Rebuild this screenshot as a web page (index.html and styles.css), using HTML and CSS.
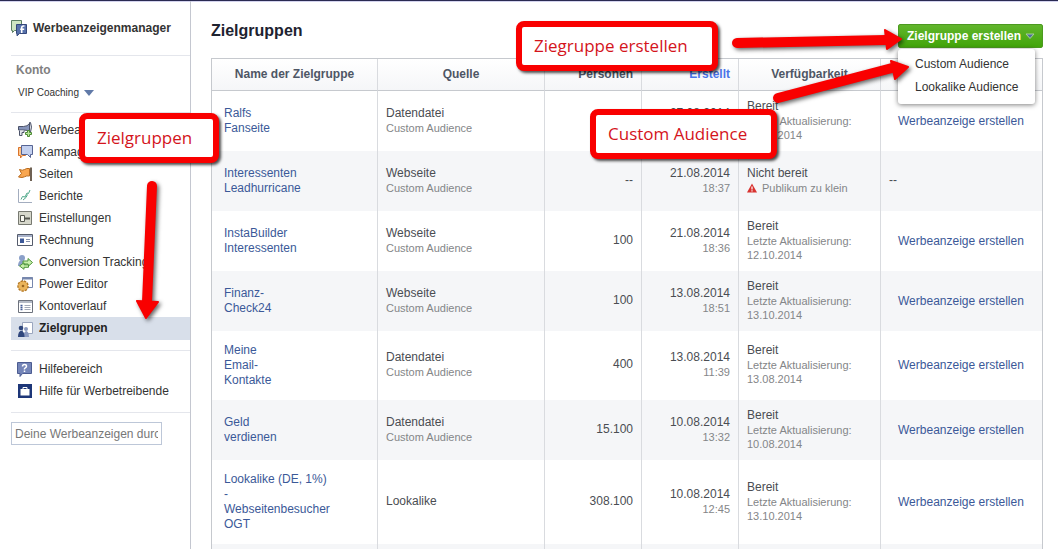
FILE: index.html
```html
<!DOCTYPE html>
<html lang="de">
<head>
<meta charset="utf-8">
<title>Werbeanzeigenmanager – Zielgruppen</title>
<link rel="stylesheet" href="styles.css">
</head>
<body>
<div class="page">
  <aside class="sidebar">
    <a class="brand" href="#">
      <svg class="icon" viewBox="0 0 16 16"><path d="M.5.500h10v10h-7l-2 2v-2h-1z" fill="#cfe6c2" stroke="#5c7f63"/><path d="M5.500 4.500h10v9h-7l-2.500 2.300v-2.300h-.5z" fill="#5872ab" stroke="#34487c"/><path d="M13.500 6h-1q-1.800 0-1.800 1.800v5.200M9.200 9.200h4" fill="none" stroke="#fff" stroke-width="1.600"/></svg>
      <span>Werbeanzeigenmanager</span>
    </a>
    <section class="account">
      <h2>Konto</h2>
      <button class="account-switch" type="button">VIP Coaching <svg class="caret" viewBox="0 0 10 6"><path d="M0 0h10L5 6z" fill="#617aa8"/></svg></button>
    </section>
    <nav class="nav">
      <a href="#"><svg class="icon" viewBox="0 0 16 16"><path d="M1.500 4.500h5q4 0 6-3v8q-2-1.500-6-1.500h-5z" fill="#8795bb" stroke="#4b5268"/><path d="M13.500.500q2 4.500 0 9.500h-1V.500z" fill="#e4e6ec" stroke="#4b5268"/><path d="M2.500 8.500v5h2.500v-3h2v-2" fill="#e4e6ec" stroke="#4b5268"/><path d="M10.500 8.500h2v2h2v2h-2v2h-2v-2h-2v-2h2z" fill="#b8e69b" stroke="#4d8a36"/></svg><span>Werbeanzeigen</span></a>
      <a href="#"><svg class="icon" viewBox="0 0 16 16"><path d="M1.500 3.500h7v8h-3l-2 2.500v-2.500h-2z" fill="#ffc48a" stroke="#d9742b"/><path d="M4.500 1.500h11v9h-2v3l-3-3h-6z" fill="#c3d0ef" stroke="#566493"/></svg><span>Kampagnen</span></a>
      <a href="#"><svg class="icon" viewBox="0 0 16 16"><path d="M2.500 3.500q3 1.500 5 0t5-1v7.500q-3-.500-5 .800t-6 .200l3-3.500z" fill="#f9a64f" stroke="#b96a1d"/><path d="M14 1.500V15" stroke="#6e6153" stroke-width="2"/></svg><span>Seiten</span></a>
      <a href="#"><svg class="icon" viewBox="0 0 16 16"><path d="M1.500 1v13.500H15" fill="none" stroke="#a3adbf"/><path d="M4 11.500l1.500-3 2.500.500 2-4 1.500.500L13 2M6 12l3-2.500 1.500-3" fill="none" stroke="#4fa98a"/></svg><span>Berichte</span></a>
      <a href="#"><svg class="icon" viewBox="0 0 16 16"><path d="M1.500 1.500h13v13h-13z" fill="#d6d7cb" stroke="#777971"/><path d="M3.500 5.500h4v6h-4z" fill="#f7f7f0" stroke="#54564f"/><path d="M7.500 8.500H13" stroke="#54564f" stroke-width="2"/></svg><span>Einstellungen</span></a>
      <a href="#"><svg class="icon" viewBox="0 0 16 16"><path d="M.5 2.500h15v11H.5z" fill="#fff" stroke="#555c6c"/><path d="M1 4h14" stroke="#a9b3cb" stroke-width="2"/><path d="M3 6.500h4V11H3z" fill="#3c5999"/><path d="M9 7.500h4M9 9.500h4" stroke="#8390ad"/></svg><span>Rechnung</span></a>
      <a href="#"><svg class="icon" viewBox="0 0 16 16"><circle cx="5" cy="4" r="3" fill="#8ba0c9"/><path d="M1 12c0-4 2-6 4-6s4 2 4 6z" fill="#8ba0c9"/><path d="M15.500 9.500l-4.500-4v2.500H6.500v-2.500L2 9.500l0 1 4.500 4v-2.500H11v-2" fill="none"/><path d="M15.500 8.500L11 4.500v2.500H6v3h5v2.500z" fill="#c8efaa" stroke="#4e963a"/><path d="M2.500 12L7 8.800v2h4.500v2.500H7v2z" fill="#c8efaa" stroke="#4e963a"/></svg><span>Conversion Tracking</span></a>
      <a href="#"><svg class="icon" viewBox="0 0 16 16"><path d="M5.500 1.500h10v10h-10z" fill="#fff" stroke="#7787ad"/><path d="M5 2.500h11" stroke="#7787ad" stroke-width="2"/><circle cx="6" cy="10" r="5" fill="#eab45a" stroke="#b57925" stroke-width="1.500" stroke-dasharray="2.400 1"/><circle cx="6" cy="10" r="4.300" fill="#eab45a"/><circle cx="6" cy="10" r="1.300" fill="#9a6620"/></svg><span>Power Editor</span></a>
      <a href="#"><svg class="icon" viewBox="0 0 16 16"><path d="M1.500 2.500h14v12h-14z" fill="#fff" stroke="#6d727d"/><path d="M2 4h13" stroke="#b4bac6" stroke-width="2"/><path d="M3.500 7.500h2m-2 2h2m-2 2h2" stroke="#425b95" stroke-width="1.300"/><path d="M7.500 7.500h6m-6 2h6m-6 2h6" stroke="#a2a9b8"/></svg><span>Kontoverlauf</span></a>
      <a class="current" href="#" aria-current="page"><svg class="icon" viewBox="0 0 16 16"><path d="M5.500 1.500h10v11h-10z" fill="#fff" stroke="#9ba6bf"/><circle cx="9" cy="8" r="2" fill="#8b9ac0"/><path d="M6.500 16c0-8 5.500-8 5.500 0z" fill="#8b9ac0"/><circle cx="4" cy="7" r="2.300" fill="#30477d"/><path d="M1 16c0-8.500 6.500-8.500 6.500 0z" fill="#30477d"/></svg><span>Zielgruppen</span></a>
    </nav>
    <nav class="nav help">
      <a href="#"><svg class="icon" viewBox="0 0 16 16"><path d="M.5 1.500h14v11H5.500l-2.500 3v-3H.5z" fill="#7485b8" stroke="#4c5c91"/><path d="M5.500 5.500q0-2 2-2t2 1.700q0 1-1.200 1.700t-.8 1.600M7.500 9.600v1.400" fill="none" stroke="#fff" stroke-width="1.500"/></svg><span>Hilfebereich</span></a>
      <a href="#"><svg class="icon" viewBox="0 0 16 16"><path d="M1 1h14v14H1z" fill="#1d3678"/><path d="M3.500 6h9v6.500h-9z" fill="#fff"/><path d="M6 6V4.500h4V6" fill="none" stroke="#fff"/></svg><span>Hilfe für Werbetreibende</span></a>
    </nav>
    <input class="search" type="text" placeholder="Deine Werbeanzeigen durchsuchen" aria-label="Deine Werbeanzeigen durchsuchen">
  </aside>

  <main class="content">
    <header class="content-head">
      <h1>Zielgruppen</h1>
      <div class="create">
        <button class="create-button" type="button" aria-expanded="true">Zielgruppe erstellen <svg class="caret" viewBox="0 0 10 6"><path d="M1 1h8L5 5.500z" fill="#4f6f9c" stroke="#a9cf98"/></svg></button>
        <div class="menu">
          <a href="#">Custom Audience</a>
          <a href="#">Lookalike Audience</a>
        </div>
      </div>
    </header>

    <table class="audiences">
      <colgroup><col class="c-name"><col class="c-source"><col class="c-num"><col class="c-num"><col class="c-state"><col></colgroup>
      <thead>
        <tr><th>Name der Zielgruppe</th><th>Quelle</th><th class="num">Personen</th><th class="num sorted">Erstellt</th><th>Verfügbarkeit</th><th></th></tr>
      </thead>
      <tbody>
        <tr><td class="name"><a href="#">Ralfs<br>Fanseite</a></td><td>Datendatei<small>Custom Audience</small></td><td class="num"></td><td class="num">27.08.2014<small>18:30</small></td><td>Bereit<small>Letzte Aktualisierung: 13.10.2014</small></td><td class="action"><a href="#">Werbeanzeige erstellen</a></td></tr>
        <tr><td class="name"><a href="#">Interessenten<br>Leadhurricane</a></td><td>Webseite<small>Custom Audience</small></td><td class="num">--</td><td class="num">21.08.2014<small>18:37</small></td><td>Nicht bereit<small class="warning"><svg viewBox="0 0 10 10"><path d="M5 .5L10 9.500H0z" fill="#d8322f"/><path d="M5 3.500v3M5 7.300v1.200" stroke="#fff" stroke-width="1.200"/></svg>Publikum zu klein</small></td><td>--</td></tr>
        <tr><td class="name"><a href="#">InstaBuilder<br>Interessenten</a></td><td>Webseite<small>Custom Audience</small></td><td class="num">100</td><td class="num">21.08.2014<small>18:36</small></td><td>Bereit<small>Letzte Aktualisierung: 12.10.2014</small></td><td class="action"><a href="#">Werbeanzeige erstellen</a></td></tr>
        <tr><td class="name"><a href="#">Finanz-<br>Check24</a></td><td>Webseite<small>Custom Audience</small></td><td class="num">100</td><td class="num">13.08.2014<small>18:51</small></td><td>Bereit<small>Letzte Aktualisierung: 13.10.2014</small></td><td class="action"><a href="#">Werbeanzeige erstellen</a></td></tr>
        <tr><td class="name"><a href="#">Meine<br>Email-<br>Kontakte</a></td><td>Datendatei<small>Custom Audience</small></td><td class="num">400</td><td class="num">13.08.2014<small>11:39</small></td><td>Bereit<small>Letzte Aktualisierung: 13.08.2014</small></td><td class="action"><a href="#">Werbeanzeige erstellen</a></td></tr>
        <tr><td class="name"><a href="#">Geld<br>verdienen</a></td><td>Datendatei<small>Custom Audience</small></td><td class="num">15.100</td><td class="num">10.08.2014<small>13:32</small></td><td>Bereit<small>Letzte Aktualisierung: 10.08.2014</small></td><td class="action"><a href="#">Werbeanzeige erstellen</a></td></tr>
        <tr><td class="name"><a href="#">Lookalike (DE, 1%)<br>-<br>Webseitenbesucher<br>OGT</a></td><td>Lookalike</td><td class="num">308.100</td><td class="num">10.08.2014<small>12:45</small></td><td>Bereit<small>Letzte Aktualisierung: 13.10.2014</small></td><td class="action"><a href="#">Werbeanzeige erstellen</a></td></tr>
        <tr><td></td><td></td><td></td><td></td><td></td><td></td></tr>
      </tbody>
    </table>
  </main>

  <div class="notes">
    <div class="callout callout-nav">Zielgruppen</div>
    <div class="callout callout-create">Ziegruppe erstellen</div>
    <div class="callout callout-custom">Custom Audience</div>
    <svg class="arrows" width="1058" height="549" viewBox="0 0 1058 549">
      <g fill="#f90000" stroke="#f90000" stroke-linecap="round" stroke-linejoin="round">
        <path d="M737 43L886 40" stroke-width="10"/><path d="M885 30L901 39L887 49z" stroke-width="2"/>
        <path d="M778 98L892 68" stroke-width="10"/><path d="M891 61L908 67L895 79z" stroke-width="2"/>
        <path d="M152 186L147 302" stroke-width="10"/><path d="M137 301L158 302L146 318z" stroke-width="2"/>
      </g>
    </svg>
  </div>
</div>
</body>
</html>
```
FILE: styles.css
```css
* { box-sizing: border-box; }

body {
  margin: 0;
  background: #fff;
  color: #4a4d52;
  font: 12px/15px "Liberation Sans", Arial, sans-serif;
}

a { color: #3b5998; text-decoration: none; }
button, input { font: inherit; }
h1, h2 { margin: 0; }

.page {
  position: relative;
  display: flex;
  height: 100vh;
  overflow: hidden;
  border-top: 1px solid #2a2a52;
  box-shadow: inset 0 1px #d3d3ee;
}

/* Sidebar */
.sidebar {
  flex: none;
  width: 191px;
  padding-left: 11px;
  border-right: 1px solid #c4c7d0;
}

.icon { flex: none; width: 16px; height: 16px; }
.caret { width: 10px; height: 6px; }

.brand {
  display: flex;
  align-items: center;
  gap: 6px;
  height: 54px;
  color: #333;
  font-weight: bold;
}

.account {
  height: 57px;
  padding: 6px 5px;
  border-top: 1px solid #e4e6ec;
}

.account h2 { color: #808080; font-size: 12px; line-height: 16px; }

.account-switch {
  display: flex;
  align-items: center;
  gap: 5px;
  margin-top: 7px;
  padding: 0 2px;
  border: 0;
  background: none;
  color: #333;
  font-size: 10px;
  line-height: 16px;
}

.nav { padding: 6px 0 10px; border-top: 1px solid #e4e6ec; }

.nav a {
  display: flex;
  align-items: center;
  gap: 6px;
  height: 22px;
  padding-left: 6px;
  color: #333;
  white-space: nowrap;
}

.nav .current { height: 23px; background: #d8dfea; color: #222; font-weight: bold; }
.help { padding-top: 7px; border-bottom: 1px solid #e4e6ec; }

.search {
  width: 151px;
  height: 23px;
  margin-top: 9px;
  padding: 0 3px;
  border: 1px solid #bdc7d8;
  color: #333;
}

.search::placeholder { color: #777; opacity: 1; }

/* Main column */
.content { flex: 1; min-width: 0; padding: 21px 15px 0 20px; }

.content-head {
  display: flex;
  justify-content: space-between;
  height: 26px;
  margin-bottom: 10px;
}

h1 { color: #1e2330; font-size: 16px; line-height: 18px; }

.create { position: relative; z-index: 1; align-self: flex-end; }

.create-button {
  display: flex;
  align-items: center;
  gap: 4px;
  height: 24px;
  padding: 0 7px 0 8px;
  border: 1px solid #4c9a20;
  border-radius: 2px;
  background: linear-gradient(#61b52c, #42a50a);
  color: #fff;
  font-weight: bold;
  white-space: nowrap;
}

.menu {
  position: absolute;
  top: 25px;
  left: 0;
  padding: 4px 0 5px;
  border-radius: 3px;
  background: #fff;
  box-shadow: 0 1px 5px rgba(0, 0, 0, 0.5);
}

.menu a {
  display: block;
  padding: 0 17px;
  color: #333;
  line-height: 23px;
  white-space: nowrap;
}

/* Audience table */
.audiences {
  width: 100%;
  border: 1px solid #c6c9ce;
  border-spacing: 0;
  table-layout: fixed;
}

.c-name { width: 165px; }
.c-source { width: 167px; }
.c-num { width: 97px; }
.c-state { width: 142px; }

th, td { height: 60px; padding: 7px 8px 9px; text-align: left; }
th + th, td + td { border-left: 1px solid #d9dbdf; }

th {
  height: 32px;
  padding: 0 8px;
  border-bottom: 1px solid #c6c9ce;
  background: linear-gradient(#fff, #f5f6f8);
  color: #4e5665;
  text-align: center;
}

tbody tr:nth-child(even) { background: #f5f6f8; }
th.num, td.num { text-align: right; }
th.sorted { color: #4a74e8; }
td.name { padding: 12px; }
td.action { padding: 8px 0 8px 17px; white-space: nowrap; }

small {
  display: block;
  color: #848688;
  font-size: 11px;
  line-height: 14px;
}

.warning { display: flex; align-items: center; gap: 5px; }
.warning svg { width: 10px; height: 10px; }

/* Callouts and arrows laid over the page */
.notes { position: absolute; top: -1px; left: 0; z-index: 2; pointer-events: none; }

.callout {
  position: absolute;
  height: 50px;
  padding: 0 12px;
  border: 6px solid #f90000;
  border-radius: 8px;
  background: #fff;
  box-shadow: 2px 2px 3px rgba(0, 0, 0, 0.7);
  color: #d4141c;
  font: 17px/38px "Open Sans", sans-serif;
  white-space: nowrap;
}

.callout-nav { top: 113px; left: 79px; width: 140px; }
.callout-create { top: 21px; left: 516px; width: 202px; }
.callout-custom { top: 109px; left: 590px; width: 187px; }

.arrows {
  position: absolute;
  top: 0;
  left: 0;
  filter: drop-shadow(2px 2px 2px rgba(0, 0, 0, 0.6));
}
```
